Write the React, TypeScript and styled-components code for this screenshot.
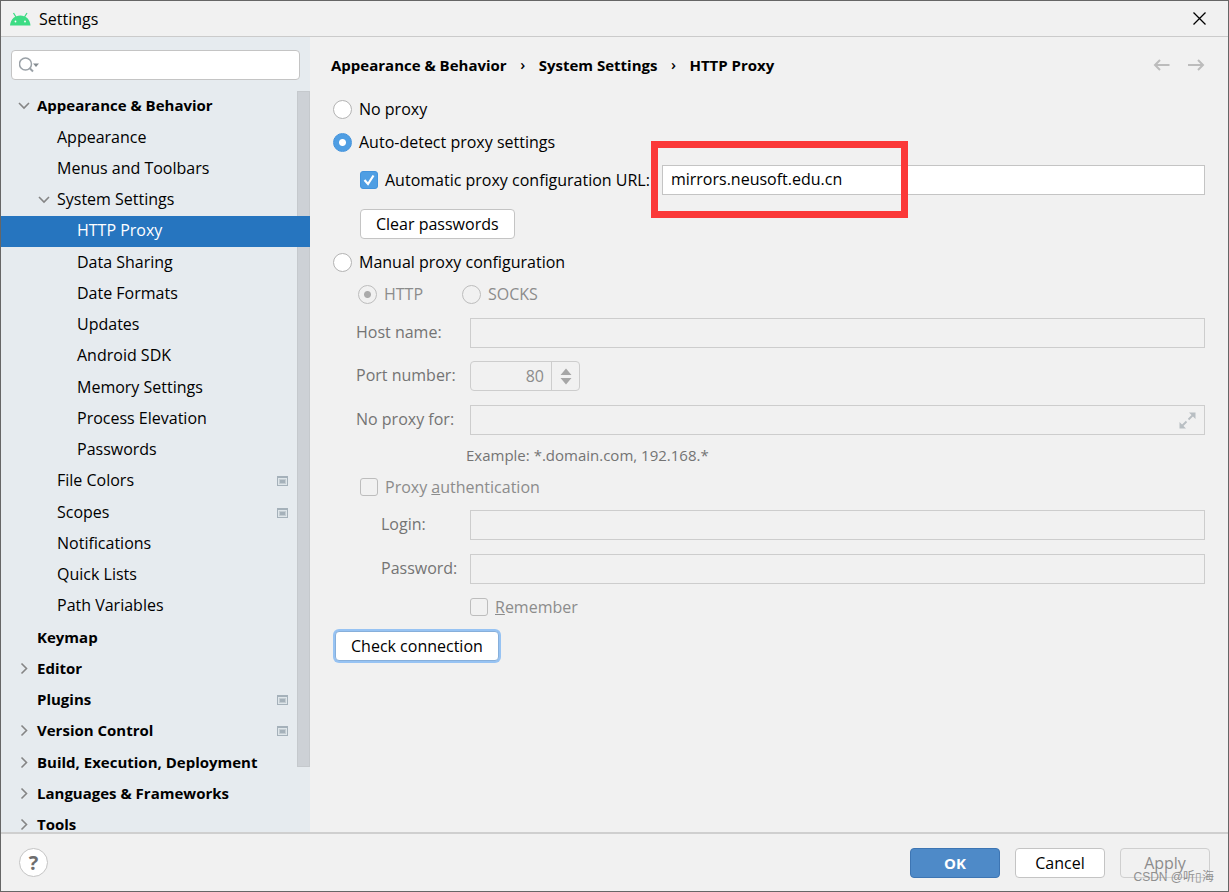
import React from 'react';
import styled, { createGlobalStyle, css } from 'styled-components';

const GlobalStyle = createGlobalStyle`
  *, *::before, *::after { box-sizing: border-box; }
  body { margin: 0; }
  body, button, input {
    font-family: 'Open Sans', 'Noto Sans CJK SC', sans-serif;
    font-size: 16px;
    line-height: 20px;
    color: #000;
  }
`;

const Window = styled.div`
  display: flex;
  flex-direction: column;
  height: 100vh;
  overflow: hidden;
  border: 1px solid #666;
  background: #f1f1f1;
`;

const TitleBar = styled.header`
  display: flex;
  flex: none;
  align-items: center;
  gap: 8px;
  height: 36px;
  padding: 0 22px 0 9px;
  border-bottom: 1px solid #cbcbcb;
`;

const Title = styled.h1`
  flex: 1;
  margin: 0;
  font-size: 16px;
  font-weight: 400;
`;

const IconButton = styled.button`
  display: flex;
  padding: 0;
  border: 0;
  background: none;
`;

const Body = styled.div`
  display: flex;
  flex: 1;
  min-height: 0;
`;

const Sidebar = styled.aside`
  display: flex;
  flex: none;
  flex-direction: column;
  width: 309px;
  background: #e6ebef;
`;

const SearchBox = styled.label`
  display: flex;
  flex: none;
  align-items: center;
  height: 30px;
  margin: 13px 10px 11px;
  padding: 0 7px;
  border: 1px solid #c4c4c4;
  border-radius: 4px;
  background: #fff;
`;

const SearchInput = styled.input`
  flex: 1;
  min-width: 0;
  border: 0;
  outline: 0;
  background: none;
`;

const TreeArea = styled.nav`
  position: relative;
  flex: 1;
  min-height: 0;
  overflow: hidden;
`;

const Scrollbar = styled.div`
  position: absolute;
  top: 0;
  right: 0;
  bottom: 65px;
  width: 13px;
  border: 1px solid #c5c9cd;
  background: #cdd1d6;
`;

const Tree = styled.ul`
  margin: 0;
  padding: 0;
  list-style: none;
`;

const TreeRow = styled.li<{ $level: number; $selected?: boolean }>`
  position: relative;
  z-index: ${(p) => (p.$selected ? 1 : 0)};
  display: flex;
  align-items: center;
  height: 31px;
  padding: 0 22px 2px ${(p) => 16 + p.$level * 20}px;
  font-size: ${(p) => (p.$level === 0 ? 15 : 16)}px;
  font-weight: ${(p) => (p.$level === 0 ? 700 : 400)};
  color: ${(p) => (p.$selected ? '#fff' : '#000')};
  background: ${(p) => (p.$selected ? '#2675bf' : 'transparent')};

  &:nth-child(4n + 1) { margin-bottom: 1px; }
`;

const Twisty = styled.span`
  display: flex;
  flex: none;
  width: 20px;
`;

const TreeLabel = styled.span`
  flex: 1;
  padding-bottom: 2px;
  white-space: nowrap;
`;

const Main = styled.main`
  flex: 1;
  min-width: 0;
  padding: 18px 23px 0 21px;
`;

const Breadcrumbs = styled.div`
  display: flex;
  align-items: center;
  height: 20px;
  margin-bottom: 24px;
  font-size: 15px;
  font-weight: 700;
`;

const Crumb = styled.span`
  white-space: nowrap;
`;

const CrumbArrow = styled.span`
  width: 32px;
  padding-bottom: 2px;
  font-weight: 600;
  text-align: center;
`;

const NavButtons = styled.div`
  display: flex;
  gap: 16px;
  margin-left: auto;
`;

const Row = styled.div<{ $indent?: number; $top?: number }>`
  display: flex;
  align-items: center;
  margin-top: ${(p) => p.$top ?? 0}px;
  padding-left: ${(p) => p.$indent ?? 2}px;
`;

const Choice = styled.label<{ $disabled?: boolean }>`
  display: flex;
  align-items: center;
  gap: 7px;
  height: 20px;
  white-space: nowrap;
  color: ${(p) => (p.$disabled ? '#8c8c8c' : '#000')};
`;

const KindChoice = styled(Choice)`
  min-width: 104px;
`;

const Radio = styled.input.attrs({ type: 'radio' })`
  flex: none;
  width: 19px;
  height: 19px;
  margin: 0;
  appearance: none;
  border: 1px solid #b3b3b3;
  border-radius: 50%;
  background: #fff;

  &:checked {
    border-color: #4393dc;
    background: radial-gradient(circle, #fff 3px, #4f9ee3 4px);
  }
  &:disabled { border-color: #bdbdbd; background: transparent; }
  &:disabled:checked { background: radial-gradient(circle, #ababab 3px, transparent 4px); }
`;

const CheckSlot = styled.span`
  position: relative;
  display: flex;
  flex: none;

  svg { position: absolute; inset: 0; pointer-events: none; }
`;

const Check = styled.input.attrs({ type: 'checkbox' })`
  width: 18px;
  height: 18px;
  margin: 0;
  appearance: none;
  border: 1px solid #b0b0b0;
  border-radius: 3px;

  &:checked { border-color: #4393dc; background: #4f9ee3; }
  &:disabled { border-color: #bdbdbd; }
`;

const TextField = styled.input`
  flex: 1;
  width: 100%;
  min-width: 0;
  height: 30px;
  padding: 0 8px 2px;
  border: 1px solid #c4c4c4;
  border-radius: 0;
  outline: 0;
  background: #fff;

  &:disabled { border-color: #cdcdcd; background: transparent; }
`;

const UrlSlot = styled.div`
  position: relative;
  display: flex;
  flex: 1;
  margin-left: 12px;
`;

const Highlight = styled.div`
  position: absolute;
  top: -24px;
  left: -11px;
  width: 257px;
  height: 77px;
  border: 7px solid #fb3838;
  pointer-events: none;
`;

const FormRow = styled.div<{ $indent: number; $top: number }>`
  display: grid;
  grid-template-columns: ${(p) => 139 - p.$indent}px 1fr;
  align-items: center;
  margin-top: ${(p) => p.$top}px;
  padding-left: ${(p) => p.$indent}px;
`;

const FieldLabel = styled.label`
  padding-bottom: 2px;
  color: #747474;
`;

const Expandable = styled.div`
  position: relative;
  display: flex;

  svg { position: absolute; top: 7px; right: 9px; }
`;

const Spinner = styled.div`
  display: flex;
  width: 110px;
  height: 30px;
  border: 1px solid #cdcdcd;
  border-radius: 4px;
`;

const SpinnerInput = styled.input`
  flex: 1;
  min-width: 0;
  padding: 0 7px;
  border: 0;
  border-right: 1px solid #cdcdcd;
  text-align: right;
  color: #8c8c8c;
  background: none;
`;

const SpinnerArrows = styled.div`
  display: flex;
  align-items: center;
  justify-content: center;
  width: 27px;
`;

const Hint = styled.p`
  margin: 10px 0 0 135px;
  font-size: 15px;
  color: #747474;
`;

const Button = styled.button<{ $kind?: 'primary' | 'focus' }>`
  height: 30px;
  padding: 0 15px;
  border: 1px solid #c4c4c4;
  border-radius: 4px;
  background: #fff;
  white-space: nowrap;

  &:disabled { color: #8c8c8c; border-color: #cfcfcf; background: transparent; }

  ${(p) => p.$kind === 'primary' && css`
    border-color: #3d75b3;
    font-size: 15px;
    font-weight: 700;
    color: #fff;
    background: #4e8ac8;
  `}
  ${(p) => p.$kind === 'focus' && css`
    border-color: #87afda;
    box-shadow: 0 0 0 2px #97c3f3;
  `}
`;

const Footer = styled.footer`
  position: relative;
  display: flex;
  flex: none;
  align-items: center;
  gap: 15px;
  height: 59px;
  padding: 0 18px;
  border-top: 2px solid #cfcfcf;

  ${Button} { width: 90px; padding: 0; }
`;

const HelpButton = styled.button`
  width: 29px;
  height: 29px;
  margin-right: auto;
  padding: 0;
  border: 1px solid #c4c4c4;
  border-radius: 50%;
  font-size: 20px;
  font-weight: 700;
  color: #6e6e6e;
  background: #fff;
`;

const Watermark = styled.span`
  position: absolute;
  right: 14px;
  bottom: 4px;
  font-family: 'Liberation Sans', 'Noto Sans CJK SC', sans-serif;
  font-size: 12px;
  color: #8f8f8f;
`;

const AndroidLogo = () => (
  <svg width="21" height="14" viewBox="0 0 21 14" aria-hidden="true">
    <path d="M0 13.500C0.500 7 5 3.500 10.250 3.500S20 7 20.500 13.500z" fill="#3ddc84" />
    <path d="M3.500 1l2.500 4M17 1l-2.500 4" stroke="#3ddc84" strokeWidth="1.300" />
    <circle cx="5.500" cy="9.500" r="0.900" fill="#fff" />
    <circle cx="15" cy="9.500" r="0.900" fill="#fff" />
  </svg>
);

const CloseIcon = () => (
  <svg width="13" height="13" viewBox="0 0 13 13" aria-hidden="true">
    <path d="M0.500 0.500l12 12M12.500 0.500l-12 12" stroke="#000" strokeWidth="1.300" />
  </svg>
);

const SearchIcon = () => (
  <svg width="22" height="18" viewBox="0 0 22 18" fill="none" aria-hidden="true">
    <circle cx="6.500" cy="8" r="6" stroke="#9aa1a7" strokeWidth="1.500" />
    <path d="M10.500 12l3.500 3.500" stroke="#9aa1a7" strokeWidth="2" />
    <path d="M14 7.500h6l-3 3.500z" fill="#858c91" />
  </svg>
);

const Chevron = ({ open }: { open: boolean }) => (
  <svg width="13" height="13" viewBox="0 0 13 13" fill="none" aria-hidden="true">
    <path d={open ? 'M2 4l5 5 5-5' : 'M4.500 1.500l5 5-5 5'} stroke="#858585" strokeWidth="1.600" />
  </svg>
);

const ProjectIcon = () => (
  <svg width="11" height="10" viewBox="0 0 11 10" aria-hidden="true">
    <path d="M0 0h11v10H0z" fill="#a5b1ba" />
    <path d="M1 2h9v7H1z" fill="#dfe6ea" />
    <path d="M2 3h7v5H2z" fill="#c3ccd2" />
    <path d="M3 4h5v3H3z" fill="#a5b1ba" />
  </svg>
);

const Arrow = ({ back }: { back?: boolean }) => (
  <svg width="18" height="14" viewBox="0 0 18 14" fill="none" aria-hidden="true">
    <path
      d={back ? 'M16.500 7H2M7 2L2 7l5 5' : 'M1 7h15M11 2l5 5-5 5'}
      stroke="#bcbcbc"
      strokeWidth="2"
    />
  </svg>
);

const CheckMark = () => (
  <svg width="18" height="18" viewBox="0 0 18 18" fill="none" aria-hidden="true">
    <path d="M4.500 9l3.500 4 5.500-8.500" stroke="#fff" strokeWidth="2.200" />
  </svg>
);

const ExpandIcon = () => (
  <svg width="17" height="17" viewBox="0 0 17 17" aria-hidden="true">
    <path d="M10 0.500h6.500V7zM0.500 10v6.500H7z" fill="#b9bfc3" />
    <path d="M9.500 7.500L14 3M7.500 9.500L3 14" stroke="#b9bfc3" strokeWidth="1.800" />
  </svg>
);

const SpinIcon = () => (
  <svg width="12" height="17" viewBox="0 0 12 17" aria-hidden="true">
    <path d="M0.500 7L6 0.500 11.500 7zM0.500 10L6 16.500 11.500 10z" fill="#a6a6a6" />
  </svg>
);

type Item = { label: string; level: number; open?: boolean; project?: boolean; selected?: boolean };

const items: Item[] = [
  { label: 'Appearance & Behavior', level: 0, open: true },
  { label: 'Appearance', level: 1 },
  { label: 'Menus and Toolbars', level: 1 },
  { label: 'System Settings', level: 1, open: true },
  { label: 'HTTP Proxy', level: 2, selected: true },
  { label: 'Data Sharing', level: 2 },
  { label: 'Date Formats', level: 2 },
  { label: 'Updates', level: 2 },
  { label: 'Android SDK', level: 2 },
  { label: 'Memory Settings', level: 2 },
  { label: 'Process Elevation', level: 2 },
  { label: 'Passwords', level: 2 },
  { label: 'File Colors', level: 1, project: true },
  { label: 'Scopes', level: 1, project: true },
  { label: 'Notifications', level: 1 },
  { label: 'Quick Lists', level: 1 },
  { label: 'Path Variables', level: 1 },
  { label: 'Keymap', level: 0 },
  { label: 'Editor', level: 0, open: false },
  { label: 'Plugins', level: 0, project: true },
  { label: 'Version Control', level: 0, open: false, project: true },
  { label: 'Build, Execution, Deployment', level: 0, open: false },
  { label: 'Languages & Frameworks', level: 0, open: false },
  { label: 'Tools', level: 0, open: false },
];

export default function App() {
  return (
    <Window>
      <GlobalStyle />
      <TitleBar>
        <AndroidLogo />
        <Title>Settings</Title>
        <IconButton aria-label="Close"><CloseIcon /></IconButton>
      </TitleBar>
      <Body>
        <Sidebar>
          <SearchBox>
            <SearchIcon />
            <SearchInput type="text" aria-label="Search settings" />
          </SearchBox>
          <TreeArea>
            <Tree>
              {items.map((item) => (
                <TreeRow key={item.label} $level={item.level} $selected={item.selected}>
                  <Twisty>{item.open !== undefined && <Chevron open={item.open} />}</Twisty>
                  <TreeLabel>{item.label}</TreeLabel>
                  {item.project && <ProjectIcon />}
                </TreeRow>
              ))}
            </Tree>
            <Scrollbar />
          </TreeArea>
        </Sidebar>
        <Main>
          <Breadcrumbs>
            <Crumb>Appearance &amp; Behavior</Crumb>
            <CrumbArrow>›</CrumbArrow>
            <Crumb>System Settings</Crumb>
            <CrumbArrow>›</CrumbArrow>
            <Crumb>HTTP Proxy</Crumb>
            <NavButtons>
              <IconButton aria-label="Back"><Arrow back /></IconButton>
              <IconButton aria-label="Forward"><Arrow /></IconButton>
            </NavButtons>
          </Breadcrumbs>
          <Row>
            <Choice><Radio name="mode" />No proxy</Choice>
          </Row>
          <Row $top={13}>
            <Choice><Radio name="mode" defaultChecked />Auto-detect proxy settings</Choice>
          </Row>
          <Row $top={13} $indent={29}>
            <Choice>
              <CheckSlot><Check defaultChecked /><CheckMark /></CheckSlot>
              Automatic proxy configuration URL:
            </Choice>
            <UrlSlot>
              <TextField type="text" aria-label="Proxy configuration URL" defaultValue="mirrors.neusoft.edu.cn" />
              <Highlight />
            </UrlSlot>
          </Row>
          <Row $top={14} $indent={29}>
            <Button>Clear passwords</Button>
          </Row>
          <Row $top={13}>
            <Choice><Radio name="mode" />Manual proxy configuration</Choice>
          </Row>
          <Row $top={12} $indent={27}>
            <KindChoice $disabled><Radio name="kind" disabled defaultChecked />HTTP</KindChoice>
            <KindChoice $disabled><Radio name="kind" disabled />SOCKS</KindChoice>
          </Row>
          <FormRow $top={14} $indent={25}>
            <FieldLabel htmlFor="host">Host name:</FieldLabel>
            <TextField id="host" type="text" disabled />
          </FormRow>
          <FormRow $top={13} $indent={25}>
            <FieldLabel htmlFor="port">Port number:</FieldLabel>
            <Spinner>
              <SpinnerInput id="port" type="text" disabled defaultValue="80" />
              <SpinnerArrows><SpinIcon /></SpinnerArrows>
            </Spinner>
          </FormRow>
          <FormRow $top={14} $indent={25}>
            <FieldLabel htmlFor="bypass">No proxy for:</FieldLabel>
            <Expandable>
              <TextField id="bypass" type="text" disabled />
              <ExpandIcon />
            </Expandable>
          </FormRow>
          <Hint>Example: *.domain.com, 192.168.*</Hint>
          <Row $top={12} $indent={29}>
            <Choice $disabled>
              <CheckSlot><Check disabled /></CheckSlot>
              <span>Proxy <u>a</u>uthentication</span>
            </Choice>
          </Row>
          <FormRow $top={13} $indent={50}>
            <FieldLabel htmlFor="login">Login:</FieldLabel>
            <TextField id="login" type="text" disabled />
          </FormRow>
          <FormRow $top={14} $indent={50}>
            <FieldLabel htmlFor="password">Password:</FieldLabel>
            <TextField id="password" type="password" disabled />
          </FormRow>
          <Row $top={13} $indent={139}>
            <Choice $disabled>
              <CheckSlot><Check disabled /></CheckSlot>
              <span><u>R</u>emember</span>
            </Choice>
          </Row>
          <Row $top={14} $indent={4}>
            <Button $kind="focus">Check connection</Button>
          </Row>
        </Main>
      </Body>
      <Footer>
        <HelpButton aria-label="Help">?</HelpButton>
        <Button $kind="primary">OK</Button>
        <Button>Cancel</Button>
        <Button disabled>Apply</Button>
        <Watermark>CSDN @听▯海</Watermark>
      </Footer>
    </Window>
  );
}
